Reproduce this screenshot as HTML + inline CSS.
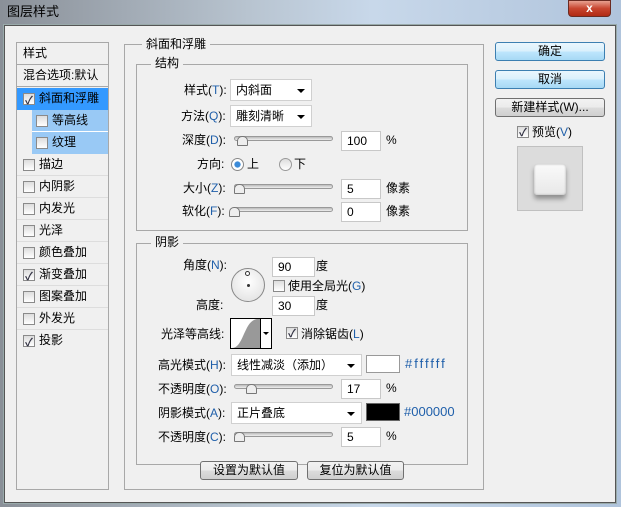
<!DOCTYPE html><html><head><meta charset="utf-8"><style>
*{margin:0;padding:0;box-sizing:border-box}
body{width:621px;height:507px;overflow:hidden;position:relative;background:linear-gradient(90deg,#8a9098 0%,#b8c4d0 40%,#c8d8ea 60%,#b0c4dc 100%);font-family:"Liberation Sans","Noto Sans CJK SC",sans-serif;font-size:12px;color:#000}
.a{position:absolute}
.t{position:absolute;white-space:nowrap;line-height:16px}
#dlg{left:4px;top:25px;width:612px;height:478px;background:#f0f0f0;border:1px solid #555;box-shadow:0 0 0 1px #9aa}
.box{position:absolute;border:1px solid #a8a8a8}
.leg{position:absolute;background:#f0f0f0;padding:0 4px;line-height:14px}
.in{position:absolute;background:#fff;border:1px solid #c8c8c8;height:20px;line-height:18px;padding-left:5px}
.dd{position:absolute;background:#fff;border:1px solid #d0d0d0;height:22px;line-height:20px;padding-left:5px}
.dd:after{content:"";position:absolute;right:6px;top:9px;border:4px solid transparent;border-top:4px solid #000}
.sl{position:absolute;height:5px;border:1px solid #999;border-radius:3px;background:linear-gradient(#bbb,#eee)}
.th{position:absolute;width:11px;height:10px;background:#eee;border:1px solid #777;border-radius:5px 5px 1px 1px}
.cb{position:absolute;width:12px;height:12px;border:1px solid #8a8a8a;background:linear-gradient(#ddd,#fff)}
.ck:after{content:"✓";position:absolute;left:1px;top:-3px;font-size:11px;color:#334;font-weight:bold}
.li{position:absolute;left:0;width:91px;height:22px;border-bottom:1px solid #ddd;line-height:21px}
.btn{position:absolute;border:1px solid #707070;border-radius:3px;background:linear-gradient(#f2f2f2,#ebebeb 50%,#dcdcdc 51%,#cfcfcf);text-align:center;line-height:17px}
.bb{border-color:#3c7fb1;background:linear-gradient(#eaf6fd,#d9f0fc 50%,#bee6fd 51%,#a7d9f5)}
.blue{color:#1f5faa}
</style></head><body>
<div class="t" style="left:7px;top:4px;font-size:13px">图层样式</div>
<div class="a" style="left:568px;top:0;width:43px;height:17px;border:1px solid #6b2b22;border-radius:0 0 4px 4px;background:linear-gradient(#e8a090,#c8452f 50%,#b02a14);color:#fff;text-align:center;font-weight:bold;line-height:15px">x</div>
<div class="a" id="dlg"></div>
<!-- left list -->
<div class="box" style="left:16px;top:42px;width:93px;height:448px;background:#f0f0f0">
 <div class="li" style="top:0;border-bottom:1px solid #a8a8a8;padding-left:6px;height:22px">样式</div>
 <div class="li" style="top:22px;padding-left:6px;border-bottom:1px solid #a8a8a8">混合选项:默认</div>
 <div class="li" style="top:45px;background:#3399ff;padding-left:22px;border:none">斜面和浮雕<span class="cb ck" style="left:6px;top:5px"></span></div>
 <div class="li" style="top:67px;left:15px;width:76px;background:#99c9f5;padding-left:20px;border-bottom:1px solid #fff">等高线<span class="cb" style="left:4px;top:5px"></span></div>
 <div class="li" style="top:89px;left:15px;width:76px;background:#99c9f5;padding-left:20px;border:none">纹理<span class="cb" style="left:4px;top:5px"></span></div>
 <div class="li" style="top:111px;padding-left:22px">描边<span class="cb" style="left:6px;top:5px"></span></div>
 <div class="li" style="top:133px;padding-left:22px">内阴影<span class="cb" style="left:6px;top:5px"></span></div>
 <div class="li" style="top:155px;padding-left:22px">内发光<span class="cb" style="left:6px;top:5px"></span></div>
 <div class="li" style="top:177px;padding-left:22px">光泽<span class="cb" style="left:6px;top:5px"></span></div>
 <div class="li" style="top:199px;padding-left:22px">颜色叠加<span class="cb" style="left:6px;top:5px"></span></div>
 <div class="li" style="top:221px;padding-left:22px">渐变叠加<span class="cb ck" style="left:6px;top:5px"></span></div>
 <div class="li" style="top:243px;padding-left:22px">图案叠加<span class="cb" style="left:6px;top:5px"></span></div>
 <div class="li" style="top:265px;padding-left:22px">外发光<span class="cb" style="left:6px;top:5px"></span></div>
 <div class="li" style="top:287px;padding-left:22px;border:none">投影<span class="cb ck" style="left:6px;top:5px"></span></div>
</div>
<!-- main group -->
<div class="box" style="left:124px;top:44px;width:360px;height:446px"></div>
<div class="leg" style="left:142px;top:37px">斜面和浮雕</div>
<div class="box" style="left:136px;top:64px;width:332px;height:167px"></div>
<div class="leg" style="left:151px;top:56px">结构</div>
<div class="t" style="left:184px;top:82px">样式(<span class="blue">T</span>):</div>
<div class="dd" style="left:230px;top:79px;width:82px">内斜面</div>
<div class="t" style="left:181px;top:108px">方法(<span class="blue">Q</span>):</div>
<div class="dd" style="left:230px;top:105px;width:82px">雕刻清晰</div>
<div class="t" style="left:182px;top:132px">深度(<span class="blue">D</span>):</div>
<div class="sl" style="left:234px;top:136px;width:99px"></div><div class="th" style="left:237px;top:136px"></div>
<div class="in" style="left:341px;top:131px;width:40px">100</div><div class="t" style="left:386px;top:132px">%</div>
<div class="t" style="left:197px;top:156px">方向:</div>
<div class="a" style="left:231px;top:158px;width:13px;height:13px;border-radius:50%;border:1px solid #888;background:radial-gradient(#3a8ad8 35%,#fff 45%)"></div>
<div class="t" style="left:247px;top:156px">上</div>
<div class="a" style="left:279px;top:158px;width:13px;height:13px;border-radius:50%;border:1px solid #999;background:linear-gradient(#ddd,#fff)"></div>
<div class="t" style="left:294px;top:156px">下</div>
<div class="t" style="left:183px;top:180px">大小(<span class="blue">Z</span>):</div>
<div class="sl" style="left:234px;top:184px;width:99px"></div><div class="th" style="left:234px;top:184px"></div>
<div class="in" style="left:341px;top:179px;width:40px">5</div><div class="t" style="left:386px;top:180px">像素</div>
<div class="t" style="left:182px;top:203px">软化(<span class="blue">F</span>):</div>
<div class="sl" style="left:234px;top:207px;width:99px"></div><div class="th" style="left:229px;top:207px"></div>
<div class="in" style="left:341px;top:202px;width:40px">0</div><div class="t" style="left:386px;top:203px">像素</div>
<!-- shadow -->
<div class="box" style="left:136px;top:243px;width:332px;height:222px"></div>
<div class="leg" style="left:151px;top:235px">阴影</div>
<div class="t" style="left:183px;top:257px">角度(<span class="blue">N</span>):</div>
<div class="a" style="left:231px;top:268px;width:34px;height:34px;border-radius:50%;border:1px solid #888;background:radial-gradient(circle at 50% 40%,#fff,#ddd)"></div>
<div class="a" style="left:245px;top:271px;width:5px;height:5px;border-radius:50%;border:1px solid #333;background:#fff"></div>
<div class="a" style="left:247px;top:284px;width:3px;height:3px;border-radius:50%;background:#333"></div>
<div class="in" style="left:272px;top:257px;width:43px">90</div><div class="t" style="left:316px;top:258px">度</div>
<div class="cb" style="left:273px;top:280px"></div><div class="t" style="left:288px;top:278px">使用全局光(<span class="blue">G</span>)</div>
<div class="t" style="left:196px;top:297px">高度:</div>
<div class="in" style="left:272px;top:296px;width:43px">30</div><div class="t" style="left:316px;top:297px">度</div>
<div class="t" style="left:161px;top:326px">光泽等高线:</div>
<div class="a" style="left:230px;top:318px;width:42px;height:31px;border:1px solid #000;background:#fff">
<svg width="28" height="29" style="position:absolute;left:1px;top:0"><path d="M0 29 C12 29 12 0 26 0 L28 0 L28 29Z" fill="#999"/></svg>
<div class="a" style="left:29px;top:0;width:1px;height:29px;background:#000"></div>
<div class="a" style="left:32px;top:13px;border:3px solid transparent;border-top:3px solid #000"></div></div>
<div class="cb ck" style="left:286px;top:327px"></div><div class="t" style="left:301px;top:326px">消除锯齿(<span class="blue">L</span>)</div>
<div class="t" style="left:158px;top:357px">高光模式(<span class="blue">H</span>):</div>
<div class="dd" style="left:231px;top:354px;width:131px">线性减淡（添加）</div>
<div class="a" style="left:366px;top:355px;width:34px;height:18px;border:1px solid #999;background:#fff"></div>
<div class="t blue" style="left:405px;top:356px;font-size:13px;letter-spacing:2px">#ffffff</div>
<div class="t" style="left:158px;top:381px">不透明度(<span class="blue">O</span>):</div>
<div class="sl" style="left:234px;top:384px;width:99px"></div><div class="th" style="left:246px;top:384px"></div>
<div class="in" style="left:341px;top:379px;width:40px">17</div><div class="t" style="left:386px;top:380px">%</div>
<div class="t" style="left:158px;top:405px">阴影模式(<span class="blue">A</span>):</div>
<div class="dd" style="left:231px;top:402px;width:131px">正片叠底</div>
<div class="a" style="left:366px;top:403px;width:34px;height:18px;border:1px solid #666;background:#000"></div>
<div class="t blue" style="left:404px;top:404px;font-size:13px">#000000</div>
<div class="t" style="left:158px;top:429px">不透明度(<span class="blue">C</span>):</div>
<div class="sl" style="left:234px;top:432px;width:99px"></div><div class="th" style="left:234px;top:432px"></div>
<div class="in" style="left:341px;top:427px;width:40px">5</div><div class="t" style="left:386px;top:428px">%</div>
<div class="btn" style="left:200px;top:461px;width:98px;height:19px">设置为默认值</div>
<div class="btn" style="left:307px;top:461px;width:97px;height:19px">复位为默认值</div>
<!-- right -->
<div class="btn bb" style="left:495px;top:42px;width:110px;height:19px">确定</div>
<div class="btn bb" style="left:495px;top:70px;width:110px;height:19px">取消</div>
<div class="btn" style="left:495px;top:98px;width:110px;height:19px">新建样式(W)...</div>
<div class="cb ck" style="left:517px;top:126px"></div><div class="t" style="left:532px;top:124px">预览(<span class="blue">V</span>)</div>
<div class="a" style="left:517px;top:146px;width:66px;height:65px;background:#dcdcdc;border:1px solid #c0c0c0">
<div class="a" style="left:16px;top:17px;width:32px;height:31px;border-radius:3px;background:linear-gradient(#fafafa,#e8e8e8);box-shadow:0 4px 5px rgba(0,0,0,.35),inset 0 0 2px #aaa"></div></div>
</body></html>
